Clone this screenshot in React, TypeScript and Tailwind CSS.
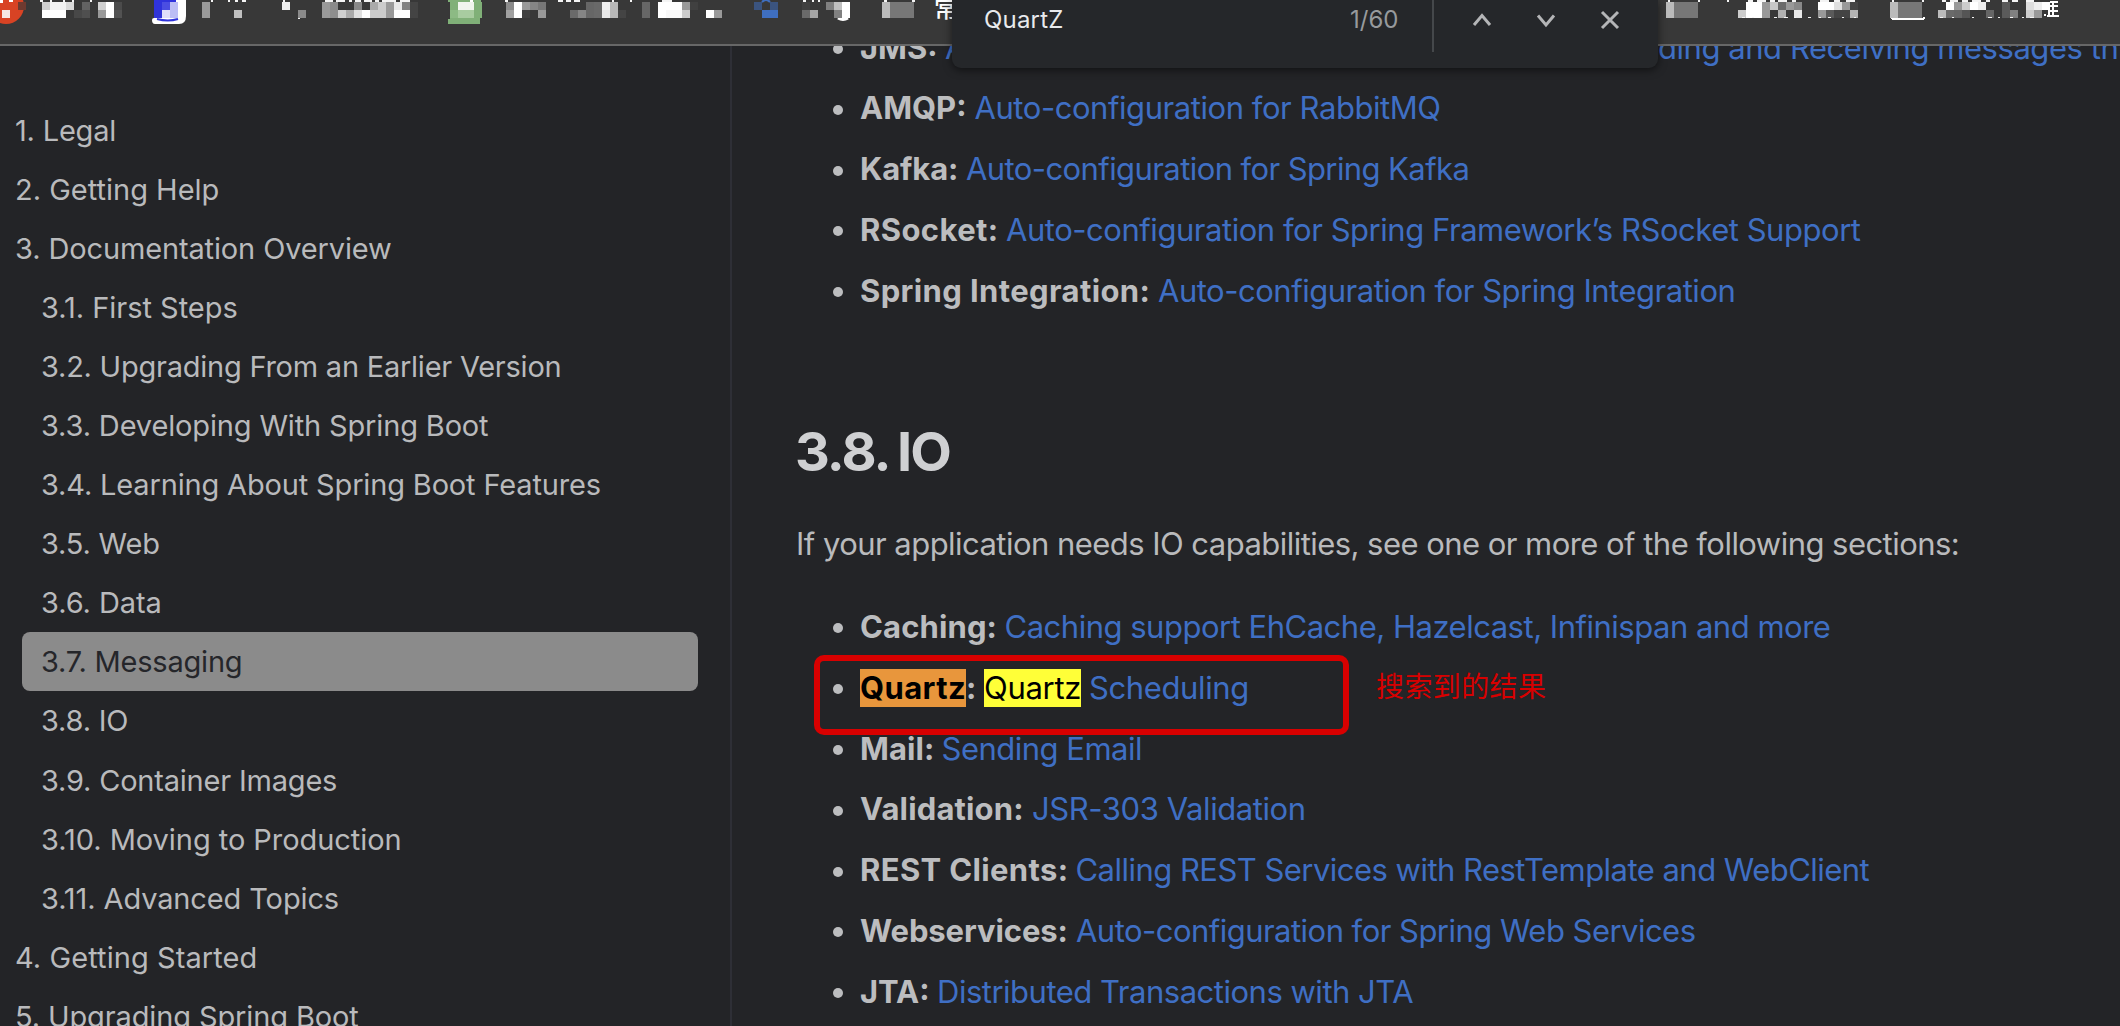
import type { ReactNode } from "react";

type NavItem = { label: string; level: 1 | 2; track: string; active?: boolean };

const NAV: NavItem[] = [
  { label: "1. Legal", level: 1, track: "tracking-[-0.2px]" },
  { label: "2. Getting Help", level: 1, track: "tracking-normal" },
  { label: "3. Documentation Overview", level: 1, track: "tracking-[-0.13px]" },
  { label: "3.1. First Steps", level: 2, track: "tracking-[-0.03px]" },
  { label: "3.2. Upgrading From an Earlier Version", level: 2, track: "tracking-[-0.24px]" },
  { label: "3.3. Developing With Spring Boot", level: 2, track: "tracking-[-0.15px]" },
  { label: "3.4. Learning About Spring Boot Features", level: 2, track: "tracking-[-0.16px]" },
  { label: "3.5. Web", level: 2, track: "tracking-[-0.2px]" },
  { label: "3.6. Data", level: 2, track: "tracking-[-0.1px]" },
  { label: "3.7. Messaging", level: 2, track: "tracking-[-0.2px]", active: true },
  { label: "3.8. IO", level: 2, track: "tracking-[-0.2px]" },
  { label: "3.9. Container Images", level: 2, track: "tracking-[-0.2px]" },
  { label: "3.10. Moving to Production", level: 2, track: "tracking-[-0.05px]" },
  { label: "3.11. Advanced Topics", level: 2, track: "tracking-[-0.12px]" },
  { label: "4. Getting Started", level: 1, track: "tracking-[0.08px]" },
  { label: "5. Upgrading Spring Boot", level: 1, track: "tracking-[-0.12px]" },
];

/* Pixelated bookmarks: x, colour of the upper cell, colour of the lower cell. */
const CELLS: [number, string, string][] = [
  [18, "#6e3a30", ""],
  [42, "#d0d0d0", "#fff"], [50, "#f2f2f2", "#fff"], [58, "#f2f2f2", "#fff"], [66, "#dadada", ""],
  [74, "", "#484848"], [82, "#626262", "#4f4f4f"], [98, "#d0d0d0", "#999"], [106, "#fff", "#fff"], [114, "#4b4b4b", "#525252"],
  [202, "#999", "#999"], [234, "", "#c0c0c0"], [282, "#eee", ""], [298, "", "#8a8a8a"],
  [322, "#999", "#9a9a9a"], [330, "#8a8a8a", "#8e8e8e"], [338, "", "#cfcfcf"], [346, "", "#aaa"], [354, "#888", "#e0e0e0"],
  [362, "", "#fff"], [370, "#aaa", "#ccc"], [378, "#ccc", "#ccc"], [386, "#9a9a9a", "#999"], [394, "#e8e8e8", "#fff"],
  [402, "#808080", "#fff"], [410, "#444", "#444"],
  [506, "#8a8a8a", "#a0a0a0"], [514, "#fff", "#fff"], [522, "#999", "#404040"], [530, "#858585", ""], [538, "#777", "#999"],
  [570, "", "#6a6a6a"], [578, "", "#858585"], [586, "#666", "#666"], [594, "#696969", "#696969"], [602, "#f0f0f0", "#e8e8e8"],
  [610, "#b8b8b8", "#b8b8b8"], [618, "", "#444"], [642, "#666", "#666"], [658, "#fff", "#fff"], [666, "#fff", "#f8f8f8"],
  [674, "#fff", "#f8f8f8"], [682, "#999", "#ccc"], [690, "#404040", ""], [706, "", "#fff"], [714, "", "#999"],
  [754, "#3b547f", ""], [762, "", "#3f6fc0"], [770, "#3b547f", "#3f6fc0"],
  [802, "#404040", "#6a6a6a"], [810, "", "#a5a5a5"], [826, "#808080", ""], [834, "#c0c0c0", "#808080"], [842, "#fff", "#fff"],
  [882, "#bbb", "#bbb"], [890, "#777", "#777"], [898, "#777", "#777"], [906, "#777", "#777"],
  [1666, "#bbb", "#bbb"], [1674, "#777", "#777"], [1682, "#777", "#777"], [1690, "#777", "#777"],
  [1738, "", "#ccc"], [1746, "#fff", "#fff"], [1754, "#fff", "#fff"], [1762, "#999", "#999"], [1770, "#c8c8c8", ""],
  [1778, "#6a6a6a", "#b0b0b0"], [1786, "#999", ""], [1794, "#888", "#e8e8e8"], [1818, "#fff", "#999"], [1826, "#fff", "#5a5a5a"],
  [1834, "#e0e0e0", "#444"], [1842, "#999", "#444"], [1850, "#444", "#b5b5b5"],
  [1890, "#bbb", "#bbb"], [1898, "#777", "#777"], [1906, "#777", "#777"], [1914, "#777", "#777"],
  [1938, "", "#bbb"], [1946, "#fff", "#6a6a6a"], [1954, "#999", "#666"], [1962, "#ccc", "#555"], [1970, "#fff", ""],
  [1978, "#eee", ""], [1986, "", "#666"], [2002, "#5a5a5a", "#5a5a5a"], [2010, "", "#808080"], [2026, "#ddd", "#ccc"],
  [2034, "#eee", "#999"], [2042, "#fff", ""],
];

/* Slivers of label text above and below the pixelated cells: x, y, width. */
const SLIVERS: [number, number, number][] = [
  [40, 0, 3], [50, 0, 2], [63, 0, 2], [72, 0, 2], [90, 0, 2], [211, 0, 2], [228, 0, 2], [235, 0, 3], [242, 0, 4], [283, 0, 2],
  [325, 0, 8], [336, 0, 9], [349, 0, 3], [355, 0, 6], [364, 0, 8], [375, 0, 4], [382, 0, 14], [400, 0, 10],
  [505, 0, 3], [558, 0, 5], [566, 0, 5], [574, 0, 6], [612, 0, 2], [630, 0, 2], [662, 0, 10], [803, 0, 3], [812, 0, 2], [818, 0, 2],
  [884, 0, 3], [912, 0, 3], [1668, 0, 2], [1698, 0, 2], [1727, 0, 2], [1748, 0, 5], [1757, 0, 9], [1770, 0, 5], [1778, 0, 9],
  [1792, 0, 4], [1820, 0, 9], [1834, 0, 6], [1846, 0, 9], [1892, 0, 2], [1922, 0, 2], [1942, 0, 4], [1950, 0, 8], [1962, 0, 6],
  [1972, 0, 9], [1986, 0, 4], [2002, 0, 6], [2012, 0, 6], [2026, 0, 8],
  [298, 18, 2], [1742, 17, 3], [1752, 17, 2], [1774, 17, 3], [1784, 17, 4], [1794, 17, 2], [1808, 17, 3], [1819, 17, 2],
  [1828, 17, 3], [1842, 17, 2], [1854, 17, 2], [1940, 17, 3], [1952, 17, 2], [1972, 17, 2], [1988, 17, 4], [1998, 17, 2],
  [2010, 17, 3], [2022, 17, 2], [2030, 17, 4],
];

function BookmarksBar() {
  return (
    <header className="relative h-[46px] shrink-0 overflow-hidden border-b-2 border-[#676767] bg-[#383838]">
      <svg width="2120" height="44" className="block" shapeRendering="crispEdges">
        <circle cx="6" cy="6" r="18" fill="#d84324" shapeRendering="auto" />
        <rect x="2" y="10" width="8" height="8" fill="#f6e8e4" />
        <rect x="0" y="0" width="3" height="3" fill="#fff" />
        <rect x="9" y="0" width="4" height="2" fill="#fff" />

        <path d="M154 0h32v16q0 8-7 8h-24q-3 0-3-4 0-2 2-2z" fill="#fff" shapeRendering="auto" />
        <rect x="154" y="0" width="22" height="3" fill="#2f33dc" />
        <rect x="154" y="2" width="8" height="8" fill="#2f33dc" />
        <rect x="162" y="2" width="8" height="8" fill="#4b4ee2" />
        <rect x="170" y="2" width="8" height="16" fill="#bcbef5" />
        <rect x="154" y="10" width="8" height="8" fill="#3034d8" />
        <rect x="162" y="10" width="8" height="8" fill="#dfdffa" />
        <path d="M157 19q11 3 21 0" stroke="#2f33dc" strokeWidth="2" fill="none" shapeRendering="auto" />

        <path d="M448 0h33v2h1v16h-2v6h-32v-5h2v-17h-2z" fill="#80b078" />
        <rect x="458" y="2" width="16" height="8" fill="#f0f5ee" />
        <rect x="458" y="10" width="16" height="8" fill="#a8cca0" />
        <rect x="450" y="10" width="8" height="8" fill="#8cba84" />
        <rect x="470" y="0" width="3" height="2" fill="#fff" />

        <path d="M762 2q4-4 8 0" stroke="#3f6fc0" strokeWidth="2" fill="none" shapeRendering="auto" />
        <path d="M838 18q5 3 10 0" stroke="#fff" strokeWidth="3" fill="none" shapeRendering="auto" />
        <path d="M1892 17q0 2 2 2h28q2 0 2-2" stroke="#fff" strokeWidth="2" fill="none" />

        {CELLS.map(([x, top, bottom]) => (
          <g key={x}>
            {top && <rect x={x} y="2" width="8" height="8" fill={top} />}
            {bottom && <rect x={x} y="10" width="8" height="8" fill={bottom} />}
          </g>
        ))}
        {SLIVERS.map(([x, y, w]) => (
          <rect key={`${x}-${y}`} x={x} y={y} width={w} height={y ? 1 : 2} fill="#f4f4f4" />
        ))}
        <text x="934" y="17" fontSize="24" fontWeight="500" fill="#fff" fontFamily="Noto Sans CJK SC, sans-serif">常</text>
        <path d="M2050 2h8M2050 6h8M2049 11h9M2047 16h12M2053 2v14M2049 4v13M2044 15h2" stroke="#fff" strokeWidth="2" />
      </svg>
    </header>
  );
}

function FindBar() {
  return (
    <div className="absolute left-[952px] top-0 z-20 flex h-[68px] w-[706px] rounded-b-[9px] bg-[#25272a] shadow-[0_2px_8px_rgba(0,0,0,0.55)]">
      <span className="ml-8 w-[366px] text-[24px] leading-[39px] tracking-[0.2px] text-[#e8eaed]">QuartZ</span>
      <span className="w-[82px] text-[24px] leading-[39px] tracking-normal text-[#979a9d]">1/60</span>
      <span className="h-[52px] w-[2px] bg-[#45484b]" />
      <svg width="224" height="40" fill="none" stroke="#b4b5b7" strokeWidth="3">
        <path d="M40 25l8-9.500 8 9.500" />
        <path d="M104 15.500l8 9.500 8-9.500" />
        <path d="M168 12l16 16M184 12l-16 16" />
      </svg>
    </div>
  );
}

function Sidebar() {
  return (
    <nav className="w-[732px] shrink-0 border-r-2 border-[#2e2f36] pl-[22px] pr-8 pt-[55px] text-[29px] text-[#b9babc]">
      {NAV.map((n) => (
        <div
          key={n.label}
          className={`h-[59.05px] whitespace-nowrap rounded-[8px] leading-[59.05px] ${n.track} ${
            n.level === 1 ? "-ml-[7px]" : "pl-[19px]"
          } ${n.active ? "bg-[#8b8b8b] text-[#25262a]" : ""}`}
        >
          {n.label}
        </div>
      ))}
    </nav>
  );
}

function Row({ term, termClass, children }: { term: ReactNode; termClass: string; children: ReactNode }) {
  return (
    <li className="flex h-[60.8px] items-center whitespace-nowrap leading-[60.8px]">
      <span className="ml-[37px] mr-[17px] mt-[2px] size-[10px] shrink-0 rounded-full bg-[#bcbdbf]" />
      <b className={`shrink-0 font-bold text-[#bcbdbf] ${termClass}`}>{term}</b>
      {children}
    </li>
  );
}

function Link({ track, children }: { track: string; children: ReactNode }) {
  return <a className={`text-[#3f6fc4] ${track}`}>{children}</a>;
}

function Content() {
  return (
    <main className="min-w-0 flex-1 overflow-hidden pl-16 text-[31px] text-[#b9babc]">
      <ul className="-mt-[28.4px]">
        <Row term="JMS:" termClass="w-[85px]">
          <a className="w-[713px] shrink-0 overflow-hidden text-[#3f6fc4] tracking-[-0.47px]">
            Auto-configuration for ActiveMQ and Artemis, Sen
          </a>
          <Link track="tracking-[-0.45px]">ding and Receiving messages through JMS</Link>
        </Row>
        <Row term="AMQP:" termClass="w-[114.5px] tracking-normal">
          <Link track="tracking-[-0.44px]">Auto-configuration for RabbitMQ</Link>
        </Row>
        <Row term="Kafka:" termClass="w-[106px] tracking-[-0.1px]">
          <Link track="tracking-[-0.59px]">Auto-configuration for Spring Kafka</Link>
        </Row>
        <Row term="RSocket:" termClass="w-[146px] tracking-[0.4px]">
          <Link track="tracking-[-0.46px]">Auto-configuration for Spring Framework’s RSocket Support</Link>
        </Row>
        <Row term="Spring Integration:" termClass="w-[298px] tracking-[0.38px]">
          <Link track="tracking-[-0.48px]">Auto-configuration for Spring Integration</Link>
        </Row>
      </ul>

      <h2 className="-ml-px mt-[98.400px] text-[54px] font-bold leading-[64px] tracking-[-1.9px] text-[#cfd0d2] [word-spacing:-2px]">
        3.8. IO
      </h2>
      <p className="mt-9 whitespace-nowrap leading-[48px] tracking-[-0.54px]">
        If your application needs IO capabilities, see one or more of the following sections:
      </p>

      <ul className="mt-[29px]">
        <Row term="Caching:" termClass="w-[144.500px] tracking-[0.12px]">
          <Link track="tracking-[-0.49px]">Caching support EhCache, Hazelcast, Infinispan and more</Link>
        </Row>
        <Row
          term={
            <>
              <mark className="inline-block h-[38px] w-[106px] bg-[#e8963c] leading-[38px] text-black">Quartz</mark>:
            </>
          }
          termClass="w-[124px] tracking-[0.4px]"
        >
          <mark className="mr-[8px] h-[38px] w-[97px] bg-[#ffff38] leading-[38px] tracking-[-0.3px] text-black">Quartz</mark>
          <Link track="tracking-[-0.38px]">Scheduling</Link>
        </Row>
        <Row term="Mail:" termClass="w-[81.500px] tracking-[0.05px]">
          <Link track="tracking-[-0.5px]">Sending Email</Link>
        </Row>
        <Row term="Validation:" termClass="w-[172px] tracking-[0.15px]">
          <Link track="tracking-[-0.42px]">JSR-303 Validation</Link>
        </Row>
        <Row term="REST Clients:" termClass="w-[215.500px] tracking-[0.35px]">
          <Link track="tracking-[-0.53px]">Calling REST Services with RestTemplate and WebClient</Link>
        </Row>
        <Row term="Webservices:" termClass="w-[216px] tracking-[-0.1px]">
          <Link track="tracking-[-0.53px]">Auto-configuration for Spring Web Services</Link>
        </Row>
        <Row term="JTA:" termClass="w-[77px] tracking-normal">
          <Link track="tracking-[-0.49px]">Distributed Transactions with JTA</Link>
        </Row>
      </ul>
    </main>
  );
}

export default function App() {
  return (
    <div className="relative flex h-[1026px] w-[2120px] flex-col overflow-hidden bg-[#232427] font-['Inter','Noto_Sans_CJK_SC',sans-serif]">
      <BookmarksBar />
      <div className="flex min-h-0 flex-1 overflow-hidden">
        <Sidebar />
        <Content />
      </div>
      <FindBar />
      <div className="absolute left-[814px] top-[655px] h-[80px] w-[535px] rounded-[10px] border-[6px] border-[#d80000]" />
      <span className="absolute left-[1376px] top-[665px] whitespace-nowrap font-['Noto_Sans_CJK_SC',sans-serif] text-[28px] leading-[40px] tracking-[0.4px] text-[#d80000]">
        搜索到的结果
      </span>
    </div>
  );
}
